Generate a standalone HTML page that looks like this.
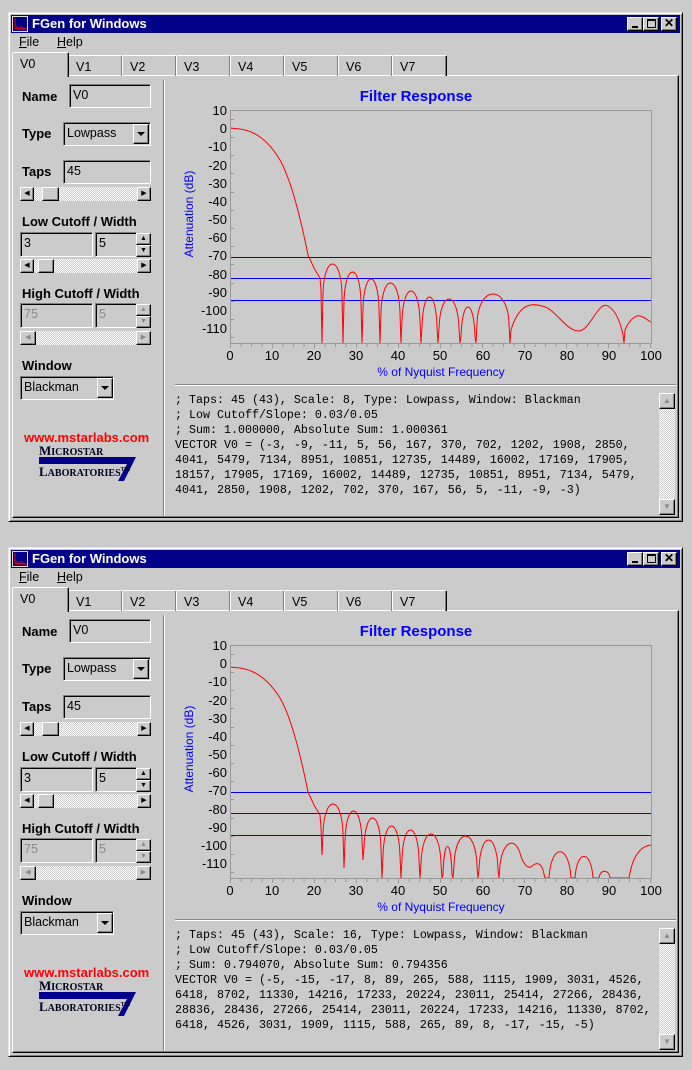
<!DOCTYPE html>
<html><head><meta charset="utf-8">
<style>
*{margin:0;padding:0;box-sizing:border-box}
body{width:692px;height:1070px;background:#cbcbcb;position:relative;overflow:hidden;font-family:"Liberation Sans",sans-serif;font-size:12px;color:#000}
.win{position:absolute;left:0;width:692px;height:535px}
.a{position:absolute}
.frame{left:8px;top:12px;width:675px;height:510px;border:1px solid;border-color:#e8e8e8 #000 #000 #e8e8e8;box-shadow:inset 1px 1px #fff,inset -1px -1px #808080}
.title{left:11px;top:15px;width:669px;height:18px;background:#000088;color:#fff;font-weight:bold;font-size:13px;line-height:18px;padding-left:21px}
.tb{top:17px;width:16px;height:14px;background:#cbcbcb;border:1px solid;border-color:#fff #000 #000 #fff;box-shadow:inset -1px -1px #808080}
.menu{top:35px;font-size:12.5px}
.tab{top:55px;height:21px;width:55px;border:1px solid;border-bottom:none;border-color:#fff #000 #000 #fff;box-shadow:inset -1px 0 #808080;border-radius:2px 2px 0 0;padding:4px 0 0 7px;font-size:12.5px}
.panel{left:12px;top:75px;width:667px;height:443px;border:1px solid;border-color:#fff #000 #000 #fff;box-shadow:inset -1px -1px #808080}
.lbl{font-weight:bold;font-size:13px}
.sk{border:1px solid;border-color:#808080 #fff #fff #808080;box-shadow:inset 1px 1px #000;padding:2px 0 0 3px;font-size:12.5px;line-height:17px}
.rs{background:#cbcbcb;border:1px solid;border-color:#fff #000 #000 #fff;box-shadow:inset -1px -1px #808080}
.trk{background:repeating-conic-gradient(#fff 0 25%,#cbcbcb 0 50%) 0 0/2px 2px}
.dis{color:#8a8a8a}
.mono{left:175px;top:393px;font-family:"Liberation Mono",monospace;font-size:11.67px;line-height:15px;white-space:pre;letter-spacing:0}
.logo{font-family:'Liberation Serif',serif;font-weight:bold;color:#000022;font-size:10px;line-height:12px;height:12px;white-space:nowrap}
.logo b{font-size:13px}
.logo i{font-size:6px;font-style:normal;vertical-align:top;line-height:8px}
</style></head><body>

<!-- WINDOW 1 -->
<div class="win" style="top:0">
<div class="a frame"></div>
<div class="a title">FGen for Windows</div>
<svg class="a" style="left:12px;top:16px" width="17" height="16"><rect x="0.5" y="0.5" width="15" height="15" fill="none" stroke="#ddd"/><path d="M3 2V13H15M5 10v3M7 11v2M9 10v3M11 11v2M13 12v1" stroke="#f00" fill="none"/></svg>
<div class="a tb" style="left:627px"><div class="a" style="left:4px;top:8px;width:6px;height:2px;background:#000"></div></div>
<div class="a tb" style="left:643px"><div class="a" style="left:3px;top:1px;width:9px;height:9px;border:1px solid #000;border-top-width:2px"></div></div>
<div class="a tb" style="left:661px;font-size:12px;line-height:11px;text-align:center;font-weight:bold">✕</div>
<div class="a menu" style="left:19px"><u>F</u>ile</div>
<div class="a menu" style="left:57px"><u>H</u>elp</div>
<div class="a panel"></div>
<div class="a tab" style="left:68px">V1</div>
<div class="a tab" style="left:122px">V2</div>
<div class="a tab" style="left:176px">V3</div>
<div class="a tab" style="left:230px">V4</div>
<div class="a tab" style="left:284px">V5</div>
<div class="a tab" style="left:338px">V6</div>
<div class="a tab" style="left:392px">V7</div>
<div class="a tab" style="left:12px;top:52px;height:25px;width:57px;background:#cbcbcb;padding-top:4px">V0</div>
<div class="a lbl" style="left:22px;top:89px">Name</div>
<div class="a sk" style="left:69px;top:84px;width:82px;height:24px">V0</div>
<div class="a lbl" style="left:22px;top:126px">Type</div>
<div class="a sk" style="left:63px;top:122px;width:88px;height:24px">Lowpass</div>
<div class="a rs" style="left:133px;top:124px;width:16px;height:20px"><div class="a" style="left:3px;top:7px;border:4px solid transparent;border-top:4px solid #000;border-bottom:0"></div></div>
<div class="a lbl" style="left:22px;top:164px">Taps</div>
<div class="a sk" style="left:63px;top:160px;width:88px;height:24px">45</div>
<div class="a trk" style="left:20px;top:187px;width:131px;height:14px"></div>
<div class="a rs" style="left:20px;top:187px;width:14px;height:14px;font-size:7px;line-height:12px;text-align:center">◀</div>
<div class="a rs" style="left:137px;top:187px;width:14px;height:14px;font-size:7px;line-height:12px;text-align:center">▶</div>
<div class="a rs" style="left:42px;top:187px;width:17px;height:14px"></div>
<div class="a lbl" style="left:22px;top:214px">Low Cutoff / Width</div>
<div class="a sk" style="left:20px;top:232px;width:73px;height:25px">3</div>
<div class="a sk" style="left:95px;top:232px;width:42px;height:25px">5</div>
<div class="a rs" style="left:136px;top:233px;width:15px;height:12px;font-size:7px;line-height:10px;text-align:center">▲</div>
<div class="a rs" style="left:136px;top:245px;width:15px;height:12px;font-size:7px;line-height:10px;text-align:center">▼</div>
<div class="a trk" style="left:20px;top:259px;width:131px;height:14px"></div>
<div class="a rs" style="left:20px;top:259px;width:14px;height:14px;font-size:7px;line-height:12px;text-align:center">◀</div>
<div class="a rs" style="left:137px;top:259px;width:14px;height:14px;font-size:7px;line-height:12px;text-align:center">▶</div>
<div class="a rs" style="left:38px;top:259px;width:16px;height:14px"></div>
<div class="a lbl" style="left:22px;top:286px">High Cutoff / Width</div>
<div class="a sk dis" style="left:20px;top:303px;width:73px;height:25px">75</div>
<div class="a sk dis" style="left:95px;top:303px;width:42px;height:25px">5</div>
<div class="a rs dis" style="left:136px;top:304px;width:15px;height:12px;font-size:7px;line-height:10px;text-align:center">▲</div>
<div class="a rs dis" style="left:136px;top:316px;width:15px;height:12px;font-size:7px;line-height:10px;text-align:center">▼</div>
<div class="a trk" style="left:20px;top:331px;width:131px;height:14px"></div>
<div class="a rs dis" style="left:20px;top:331px;width:16px;height:14px;font-size:7px;line-height:12px;text-align:center">◀</div>
<div class="a rs dis" style="left:136px;top:331px;width:15px;height:14px;font-size:7px;line-height:12px;text-align:center">▶</div>
<div class="a lbl" style="left:22px;top:358px">Window</div>
<div class="a sk" style="left:20px;top:376px;width:94px;height:24px">Blackman</div>
<div class="a rs" style="left:97px;top:378px;width:16px;height:20px"><div class="a" style="left:3px;top:7px;border:4px solid transparent;border-top:4px solid #000;border-bottom:0"></div></div>
<div class="a" style="left:24px;top:430px;color:#f00;font-weight:bold;font-size:13px">www.mstarlabs.com</div>
<div class="a logo" style="left:39px;top:445px"><b>M</b>ICROSTAR</div>
<svg class="a" style="left:38px;top:456px" width="100" height="26"><path d="M1 1H98L86 25H80L89 8H1Z" fill="#00008b"/></svg>
<div class="a logo" style="left:39px;top:466px"><b>L</b>ABORATORIES<i>TM</i></div>
<div class="a" style="left:163px;top:80px;width:1px;height:436px;background:#808080;box-shadow:1px 0 #fff"></div>
<svg class="a" style="left:0;top:0" width="692" height="535" font-family="Liberation Sans, sans-serif">
<text x="416" y="101" text-anchor="middle" fill="#0000ff" font-weight="bold" font-size="15">Filter Response</text>
<rect x="230.5" y="110.5" width="421" height="233" fill="none" stroke="#999"/>
<g stroke="#999">
<path d="M231 119.5h3M231 137.5h3M231 155.5h3M231 173.5h3M231 192.5h3M231 210.5h3M231 228.5h3M231 246.5h3M231 264.5h3M231 283.5h3M231 301.5h3M231 319.5h3M231 337.5h3"/>
<path d="M230.5 344v4M241 344v3M251.5 344v3M262 344v3M272.5 344v4M283 344v3M293.5 344v3M304 344v3M314.5 344v4M325 344v3M335.5 344v3M346 344v3M356.5 344v4M367 344v3M377.5 344v3M388 344v3M398.5 344v4M409 344v3M419.5 344v3M430 344v3M440.5 344v4M451 344v3M461.5 344v3M472 344v3M482.5 344v4M493 344v3M503.5 344v3M514 344v3M524.5 344v4M535 344v3M545.5 344v3M556 344v3M566.5 344v4M577 344v3M587.5 344v3M598 344v3M608.5 344v4M619 344v3M629.5 344v3M640 344v3M650.5 344v4"/>
</g>
<g font-size="13" text-anchor="end" fill="#000">
<text x="227" y="115">10</text><text x="227" y="133">0</text><text x="227" y="151">-10</text><text x="227" y="170">-20</text><text x="227" y="188">-30</text><text x="227" y="206">-40</text><text x="227" y="224">-50</text><text x="227" y="242">-60</text><text x="227" y="260">-70</text><text x="227" y="279">-80</text><text x="227" y="297">-90</text><text x="227" y="315">-100</text><text x="227" y="333">-110</text>
</g>
<g font-size="13" text-anchor="middle">
<text x="230" y="360">0</text><text x="272" y="360">10</text><text x="314" y="360">20</text><text x="356" y="360">30</text><text x="398" y="360">40</text><text x="440" y="360">50</text><text x="483" y="360">60</text><text x="525" y="360">70</text><text x="567" y="360">80</text><text x="609" y="360">90</text><text x="651" y="360">100</text>
</g>
<text x="441" y="376" text-anchor="middle" fill="#0000ff" font-size="12">% of Nyquist Frequency</text>
<text transform="translate(193,214) rotate(-90)" text-anchor="middle" fill="#0000ff" font-size="12">Attenuation (dB)</text>
<g stroke="#0000ee" stroke-width="1">
<path d="M231 257.5H651M231 278.5H651M231 300.5H651"/>
</g>
<clipPath id="c1"><rect x="231" y="111" width="420" height="232"/></clipPath>
<path clip-path="url(#c1)" fill="none" stroke="#f00" d="M230,128 L240,129 C255,131 268,140 280,160 C290,178 300,215 308,255 L314,268 L320,278 L321,290 L322,343 L323,294 C324,254 341,254 342,294 L343,343 L344,302 C345,262 360,262 361,302 L362,343 L363,309 C364,269 378,269 379,309 L380,343 L381,313 C382,273 399,273 400,313 L401,343 L402,321 C403,281 419,281 420,321 L421,343 L422,327 C423,287 436,287 437,327 L438,343 L439,329 C440,289 458,289 459,329 L460,343 L461,337 C462,297 474,297 475,337 L476,343 L477,324 C478,284 508,284 509,324 L510,343 L511,330 C520,300 535,304 542,306 C555,308 565,330 578,331 C590,332 598,300 608,306 C615,310 620,320 623,335 L624,343 L625,330 C630,318 637,315 640,316 C645,317 648,321 651,322"/>
<path d="M175 384.5H676" stroke="#888"/><path d="M175 385.5H676" stroke="#fff"/>
</svg>
<div class="a mono">; Taps: 45 (43), Scale: 8, Type: Lowpass, Window: Blackman
; Low Cutoff/Slope: 0.03/0.05
; Sum: 1.000000, Absolute Sum: 1.000361
VECTOR V0 = (-3, -9, -11, 5, 56, 167, 370, 702, 1202, 1908, 2850,
4041, 5479, 7134, 8951, 10851, 12735, 14489, 16002, 17169, 17905,
18157, 17905, 17169, 16002, 14489, 12735, 10851, 8951, 7134, 5479,
4041, 2850, 1908, 1202, 702, 370, 167, 56, 5, -11, -9, -3)</div>
<div class="a trk" style="left:659px;top:393px;width:16px;height:122px"></div>
<div class="a rs dis" style="left:659px;top:393px;width:16px;height:16px;font-size:8px;line-height:14px;text-align:center">▲</div>
<div class="a rs dis" style="left:659px;top:499px;width:16px;height:16px;font-size:8px;line-height:14px;text-align:center">▼</div>
</div>

<!-- WINDOW 2 -->
<div class="win" style="top:535px">
<div class="a frame"></div>
<div class="a title">FGen for Windows</div>
<svg class="a" style="left:12px;top:16px" width="17" height="16"><rect x="0.5" y="0.5" width="15" height="15" fill="none" stroke="#ddd"/><path d="M3 2V13H15M5 10v3M7 11v2M9 10v3M11 11v2M13 12v1" stroke="#f00" fill="none"/></svg>
<div class="a tb" style="left:627px"><div class="a" style="left:4px;top:8px;width:6px;height:2px;background:#000"></div></div>
<div class="a tb" style="left:643px"><div class="a" style="left:3px;top:1px;width:9px;height:9px;border:1px solid #000;border-top-width:2px"></div></div>
<div class="a tb" style="left:661px;font-size:12px;line-height:11px;text-align:center;font-weight:bold">✕</div>
<div class="a menu" style="left:19px"><u>F</u>ile</div>
<div class="a menu" style="left:57px"><u>H</u>elp</div>
<div class="a panel"></div>
<div class="a tab" style="left:68px">V1</div>
<div class="a tab" style="left:122px">V2</div>
<div class="a tab" style="left:176px">V3</div>
<div class="a tab" style="left:230px">V4</div>
<div class="a tab" style="left:284px">V5</div>
<div class="a tab" style="left:338px">V6</div>
<div class="a tab" style="left:392px">V7</div>
<div class="a tab" style="left:12px;top:52px;height:25px;width:57px;background:#cbcbcb;padding-top:4px">V0</div>
<div class="a lbl" style="left:22px;top:89px">Name</div>
<div class="a sk" style="left:69px;top:84px;width:82px;height:24px">V0</div>
<div class="a lbl" style="left:22px;top:126px">Type</div>
<div class="a sk" style="left:63px;top:122px;width:88px;height:24px">Lowpass</div>
<div class="a rs" style="left:133px;top:124px;width:16px;height:20px"><div class="a" style="left:3px;top:7px;border:4px solid transparent;border-top:4px solid #000;border-bottom:0"></div></div>
<div class="a lbl" style="left:22px;top:164px">Taps</div>
<div class="a sk" style="left:63px;top:160px;width:88px;height:24px">45</div>
<div class="a trk" style="left:20px;top:187px;width:131px;height:14px"></div>
<div class="a rs" style="left:20px;top:187px;width:14px;height:14px;font-size:7px;line-height:12px;text-align:center">◀</div>
<div class="a rs" style="left:137px;top:187px;width:14px;height:14px;font-size:7px;line-height:12px;text-align:center">▶</div>
<div class="a rs" style="left:42px;top:187px;width:17px;height:14px"></div>
<div class="a lbl" style="left:22px;top:214px">Low Cutoff / Width</div>
<div class="a sk" style="left:20px;top:232px;width:73px;height:25px">3</div>
<div class="a sk" style="left:95px;top:232px;width:42px;height:25px">5</div>
<div class="a rs" style="left:136px;top:233px;width:15px;height:12px;font-size:7px;line-height:10px;text-align:center">▲</div>
<div class="a rs" style="left:136px;top:245px;width:15px;height:12px;font-size:7px;line-height:10px;text-align:center">▼</div>
<div class="a trk" style="left:20px;top:259px;width:131px;height:14px"></div>
<div class="a rs" style="left:20px;top:259px;width:14px;height:14px;font-size:7px;line-height:12px;text-align:center">◀</div>
<div class="a rs" style="left:137px;top:259px;width:14px;height:14px;font-size:7px;line-height:12px;text-align:center">▶</div>
<div class="a rs" style="left:38px;top:259px;width:16px;height:14px"></div>
<div class="a lbl" style="left:22px;top:286px">High Cutoff / Width</div>
<div class="a sk dis" style="left:20px;top:303px;width:73px;height:25px">75</div>
<div class="a sk dis" style="left:95px;top:303px;width:42px;height:25px">5</div>
<div class="a rs dis" style="left:136px;top:304px;width:15px;height:12px;font-size:7px;line-height:10px;text-align:center">▲</div>
<div class="a rs dis" style="left:136px;top:316px;width:15px;height:12px;font-size:7px;line-height:10px;text-align:center">▼</div>
<div class="a trk" style="left:20px;top:331px;width:131px;height:14px"></div>
<div class="a rs dis" style="left:20px;top:331px;width:16px;height:14px;font-size:7px;line-height:12px;text-align:center">◀</div>
<div class="a rs dis" style="left:136px;top:331px;width:15px;height:14px;font-size:7px;line-height:12px;text-align:center">▶</div>
<div class="a lbl" style="left:22px;top:358px">Window</div>
<div class="a sk" style="left:20px;top:376px;width:94px;height:24px">Blackman</div>
<div class="a rs" style="left:97px;top:378px;width:16px;height:20px"><div class="a" style="left:3px;top:7px;border:4px solid transparent;border-top:4px solid #000;border-bottom:0"></div></div>
<div class="a" style="left:24px;top:430px;color:#f00;font-weight:bold;font-size:13px">www.mstarlabs.com</div>
<div class="a logo" style="left:39px;top:445px"><b>M</b>ICROSTAR</div>
<svg class="a" style="left:38px;top:456px" width="100" height="26"><path d="M1 1H98L86 25H80L89 8H1Z" fill="#00008b"/></svg>
<div class="a logo" style="left:39px;top:466px"><b>L</b>ABORATORIES<i>TM</i></div>
<div class="a" style="left:163px;top:80px;width:1px;height:436px;background:#808080;box-shadow:1px 0 #fff"></div>
<svg class="a" style="left:0;top:0" width="692" height="535" font-family="Liberation Sans, sans-serif">
<text x="416" y="101" text-anchor="middle" fill="#0000ff" font-weight="bold" font-size="15">Filter Response</text>
<rect x="230.5" y="110.5" width="421" height="233" fill="none" stroke="#999"/>
<g stroke="#999">
<path d="M231 119.5h3M231 137.5h3M231 155.5h3M231 173.5h3M231 192.5h3M231 210.5h3M231 228.5h3M231 246.5h3M231 264.5h3M231 283.5h3M231 301.5h3M231 319.5h3M231 337.5h3"/>
<path d="M230.5 344v4M241 344v3M251.5 344v3M262 344v3M272.5 344v4M283 344v3M293.5 344v3M304 344v3M314.5 344v4M325 344v3M335.5 344v3M346 344v3M356.5 344v4M367 344v3M377.5 344v3M388 344v3M398.5 344v4M409 344v3M419.5 344v3M430 344v3M440.5 344v4M451 344v3M461.5 344v3M472 344v3M482.5 344v4M493 344v3M503.5 344v3M514 344v3M524.5 344v4M535 344v3M545.5 344v3M556 344v3M566.5 344v4M577 344v3M587.5 344v3M598 344v3M608.5 344v4M619 344v3M629.5 344v3M640 344v3M650.5 344v4"/>
</g>
<g font-size="13" text-anchor="end" fill="#000">
<text x="227" y="115">10</text><text x="227" y="133">0</text><text x="227" y="151">-10</text><text x="227" y="170">-20</text><text x="227" y="188">-30</text><text x="227" y="206">-40</text><text x="227" y="224">-50</text><text x="227" y="242">-60</text><text x="227" y="260">-70</text><text x="227" y="279">-80</text><text x="227" y="297">-90</text><text x="227" y="315">-100</text><text x="227" y="333">-110</text>
</g>
<g font-size="13" text-anchor="middle">
<text x="230" y="360">0</text><text x="272" y="360">10</text><text x="314" y="360">20</text><text x="356" y="360">30</text><text x="398" y="360">40</text><text x="440" y="360">50</text><text x="483" y="360">60</text><text x="525" y="360">70</text><text x="567" y="360">80</text><text x="609" y="360">90</text><text x="651" y="360">100</text>
</g>
<text x="441" y="376" text-anchor="middle" fill="#0000ff" font-size="12">% of Nyquist Frequency</text>
<text transform="translate(193,214) rotate(-90)" text-anchor="middle" fill="#0000ff" font-size="12">Attenuation (dB)</text>
<g stroke="#0000ee" stroke-width="1">
<path d="M231 257.5H651M231 278.5H651M231 300.5H651"/>
</g>
<clipPath id="c2"><rect x="231" y="111" width="420" height="232"/></clipPath>
<path clip-path="url(#c2)" fill="none" stroke="#f00" d="M230,132 L240,133 C255,135 268,144 280,163 C290,180 300,217 308,257 L314,270 L320,280 L321,292 L322,320 L323,299 C324,259 342,259 343,299 L344,333 L345,306 C346,266 361,266 362,306 L363,325 L364,313 C365,273 380,273 381,313 L382,343 L383,321 C384,281 399,281 400,321 L401,343 L402,325 C403,285 418,285 419,325 L420,343 L421,329 C422,289 440,289 441,329 L442,343 L443,340 C444,302 451,302 452,340 L453,343 L454,331 C455,291 476,291 477,331 L478,343 L479,335 C480,295 497,295 498,335 L499,343 L500,330 C503,305 515,302 520,318 C523,330 528,333 531,332 C535,328 540,326 543,335 L545,343 L549,343 C551,308 569,308 571,343 L575,343 C577,314 591,314 593,343 L599,343 C600,334 609,334 610,343 L629,343 C633,318 642,311 651,310"/>
<path d="M175 384.5H676" stroke="#888"/><path d="M175 385.5H676" stroke="#fff"/>
</svg>
<div class="a mono">; Taps: 45 (43), Scale: 16, Type: Lowpass, Window: Blackman
; Low Cutoff/Slope: 0.03/0.05
; Sum: 0.794070, Absolute Sum: 0.794356
VECTOR V0 = (-5, -15, -17, 8, 89, 265, 588, 1115, 1909, 3031, 4526,
6418, 8702, 11330, 14216, 17233, 20224, 23011, 25414, 27266, 28436,
28836, 28436, 27266, 25414, 23011, 20224, 17233, 14216, 11330, 8702,
6418, 4526, 3031, 1909, 1115, 588, 265, 89, 8, -17, -15, -5)</div>
<div class="a trk" style="left:659px;top:393px;width:16px;height:122px"></div>
<div class="a rs dis" style="left:659px;top:393px;width:16px;height:16px;font-size:8px;line-height:14px;text-align:center">▲</div>
<div class="a rs dis" style="left:659px;top:499px;width:16px;height:16px;font-size:8px;line-height:14px;text-align:center">▼</div>
</div>
</body></html>
